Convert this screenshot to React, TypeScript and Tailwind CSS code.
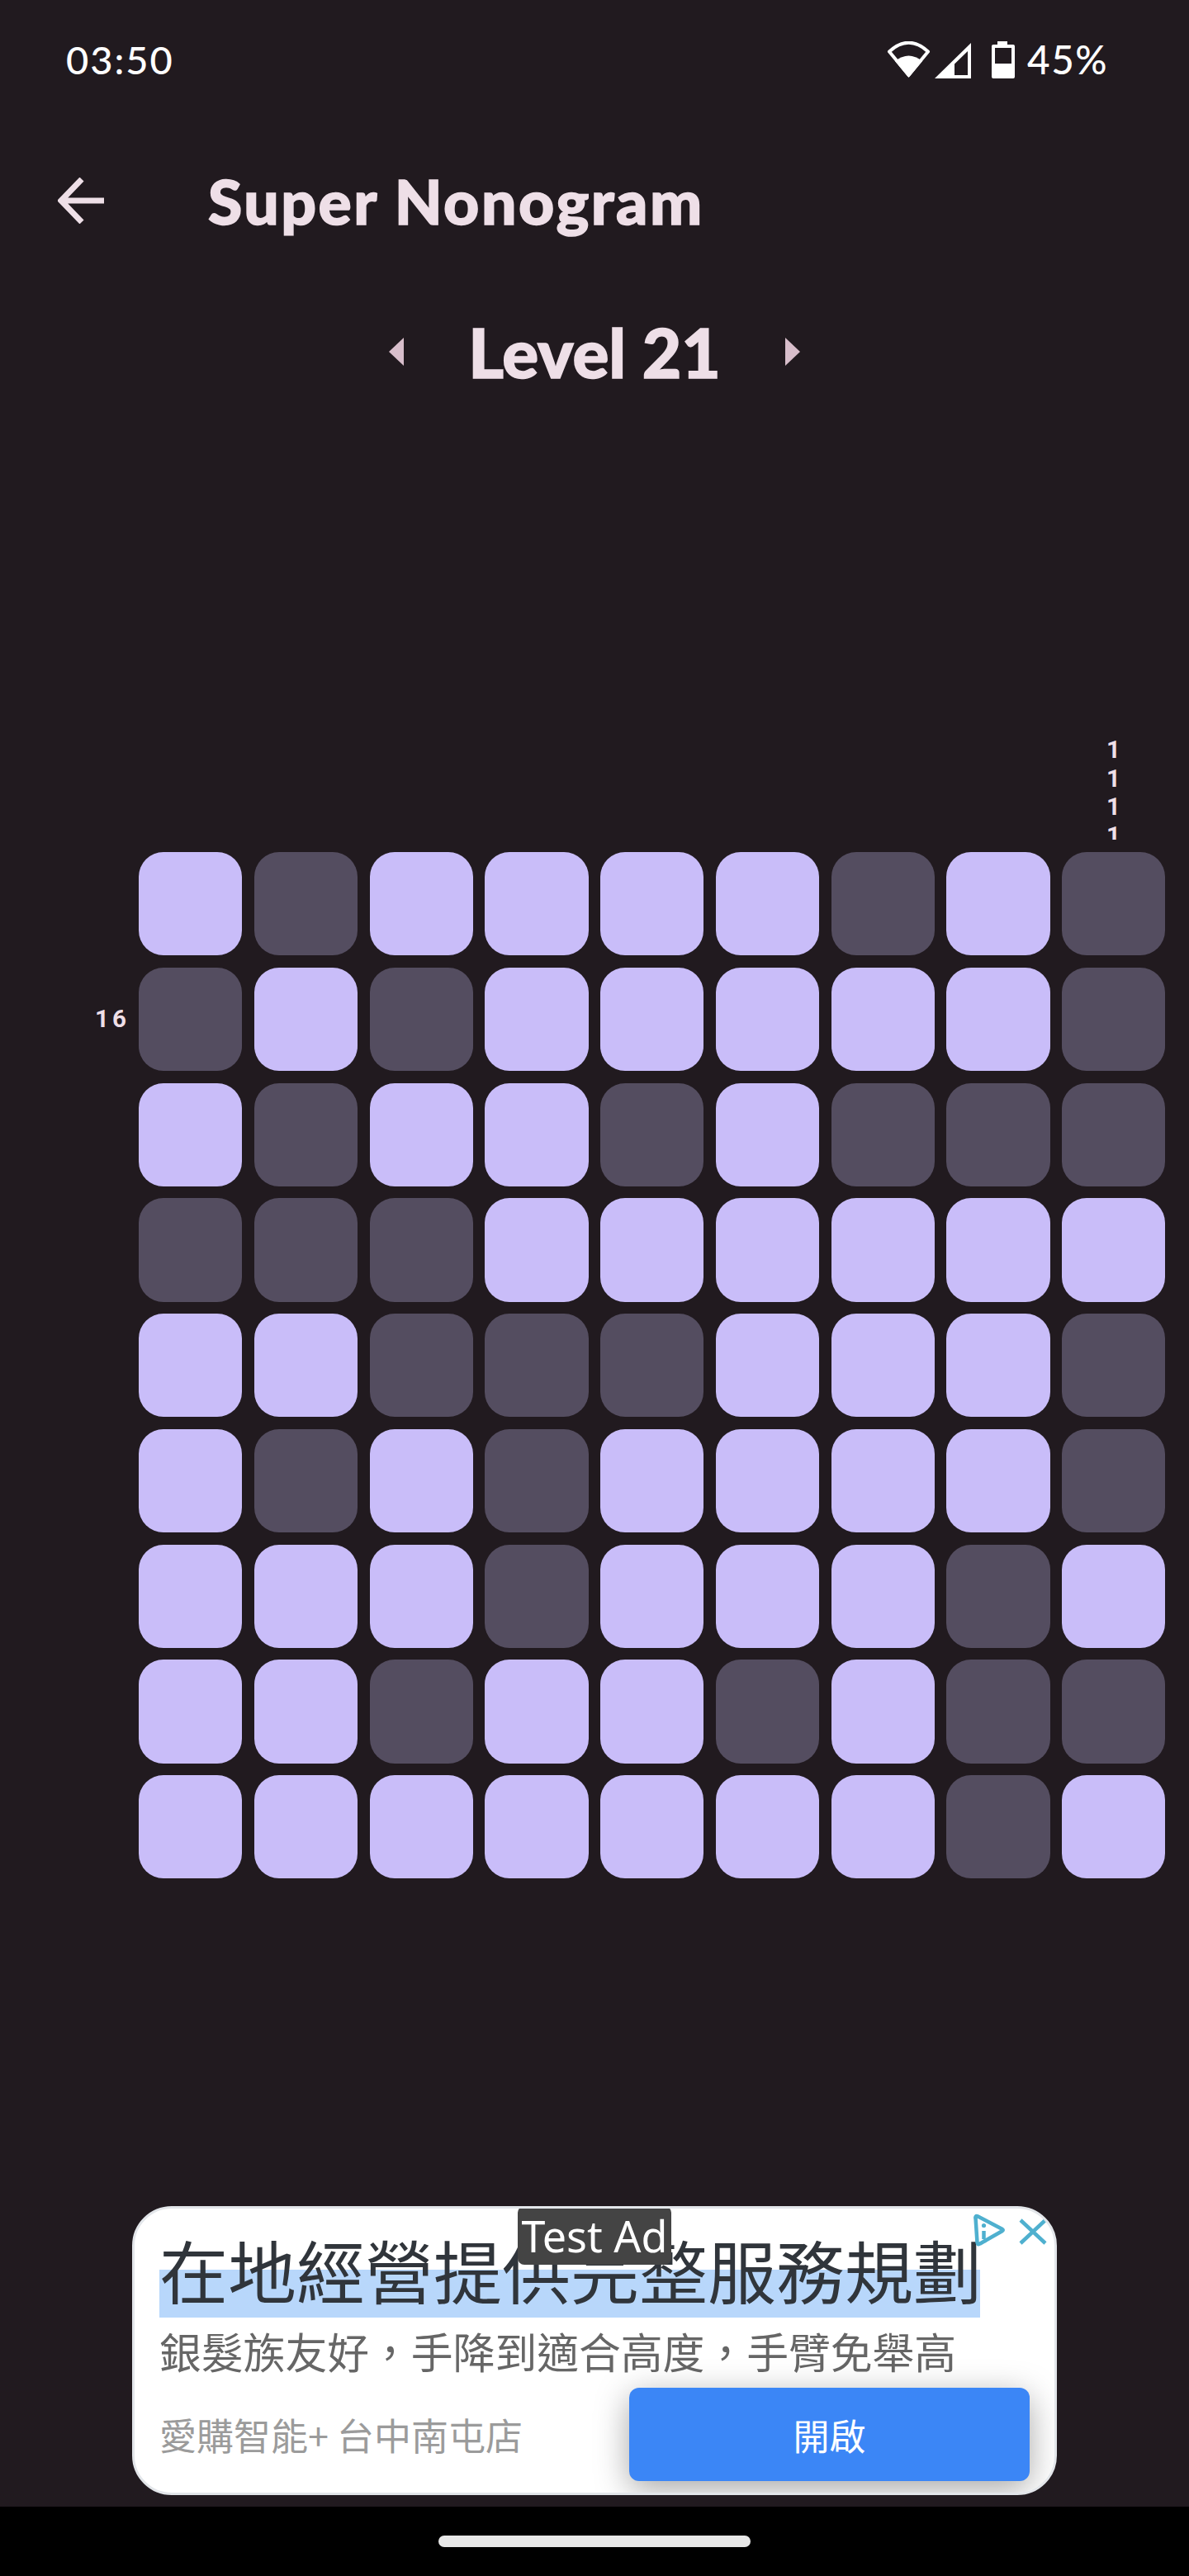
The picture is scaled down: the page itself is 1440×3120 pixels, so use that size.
const L = 1;
const D = 0;

// puzzle state, row by row
const board = [
	[L, D, L, L, L, L, D, L, D],
	[D, L, D, L, L, L, L, L, D],
	[L, D, L, L, D, L, D, D, D],
	[D, D, D, L, L, L, L, L, L],
	[L, L, D, D, D, L, L, L, D],
	[L, D, L, D, L, L, L, L, D],
	[L, L, L, D, L, L, L, D, L],
	[L, L, D, L, L, D, L, D, D],
	[L, L, L, L, L, L, L, D, L],
];

function StatusIcons() {
	return (
		<svg width="156" height="46" viewBox="1075 50 156 46" fill="none">
			{/* wifi */}
			<path d="M1101.5 91 L1078 62.5 Q1101.5 41 1125 62.5 Z" stroke="#fff" strokeWidth="4" strokeLinejoin="round" />
			<path d="M1101.5 94 L1085 74 Q1101.5 61 1118 74 Z" fill="#fff" />
			{/* signal */}
			<path fillRule="evenodd" d="M1133 95 L1177 52 V95 Z M1157 91 H1173 V62 L1157 77.5 Z" fill="#fff" />
			{/* battery */}
			<path fillRule="evenodd" d="M1209 50 H1221 V54 H1228 Q1230 54 1230 56 V93 Q1230 95 1228 95 H1204 Q1202 95 1202 93 V56 Q1202 54 1204 54 H1209 Z M1206 58 V77 H1226 V58 Z" fill="#fff" />
		</svg>
	);
}

function AdChoices() {
	return (
		<svg width="40" height="40" viewBox="0 0 40 40" fill="none" stroke="#4fb0cf" strokeWidth="4.5" strokeLinecap="round">
			<path d="M3.5 5 Q3.5 2 6.5 3.5 L36 19 Q37.5 20 36 21 L15 33" />
			<path d="M3.5 5 L5.5 35 Q6 38.5 9 36.5 L15 33" />
			<path d="M13.5 21 V31" strokeLinecap="butt" />
			<circle cx="13.5" cy="14.5" r="2.6" fill="#4fb0cf" stroke="none" />
		</svg>
	);
}

export default function App() {
	return (
		<div className="w-[1440px] h-[3120px] bg-[#211a1f] flex flex-col font-['Lato',sans-serif] overflow-hidden">
			{/* Status bar */}
			<div className="h-[183px] shrink-0 flex items-start justify-between pl-[80px] pr-[98px] pt-[50px] text-white">
				<span className="text-[47px] leading-[44px] tracking-[2px] font-medium">03:50</span>
				<div className="flex items-start gap-[14px]">
					<StatusIcons />
					<span className="text-[47.5px] leading-[44px] tracking-[1.5px] font-medium">45%</span>
				</div>
			</div>

			{/* App bar */}
			<div className="h-[120px] shrink-0 flex items-center pl-[70px] text-[#eedfe7]">
				<svg width="56" height="56" viewBox="0 0 56 56" fill="none" stroke="#eedfe7" strokeWidth="7">
					<path d="M56 28 H5 M29 2 L4 28 L29 54" />
				</svg>
				<h1 className="ml-[126px] text-[75px] leading-none font-black tracking-[2.5px] [-webkit-text-stroke:1.5px_#eedfe7]">Super Nonogram</h1>
			</div>

			{/* Level picker */}
			<div className="mt-[75px] h-[96px] shrink-0 flex items-center justify-center text-[#eedfe7]">
				<svg width="18" height="34" viewBox="0 0 18 34" className="fill-[#d8becb]">
					<path d="M18 0 V34 L0 17 Z" />
				</svg>
				<span className="mx-[78px] text-[82px] leading-none font-black [-webkit-text-stroke:1.5px_#eedfe7]">Level 21</span>
				<svg width="18" height="34" viewBox="0 0 18 34" className="fill-[#d8becb]">
					<path d="M0 0 V34 L18 17 Z" />
				</svg>
			</div>

			{/* Top clue */}
			<div className="mt-[404px] h-[139px] shrink-0 flex flex-col items-center overflow-hidden text-[#eedfe7] pl-[1257px] pt-[13px] font-bold text-[29.5px] leading-[34.67px] font-['Roboto',sans-serif]">
				<span>1</span>
				<span>1</span>
				<span>1</span>
				<span>1</span>
			</div>

			{/* Board */}
			<div className="mt-[15px] shrink-0 flex pl-[112px]">
				<div className="w-[56px] shrink-0 pt-[140px]">
					<div className="h-[125px] flex items-center text-[#eedfe7] text-[29.5px] font-bold tracking-[4px] pl-[3px] font-['Roboto',sans-serif]">16</div>
				</div>
				<div className="grid grid-cols-[repeat(9,125.25px)] auto-rows-[125.25px] gap-[14.5px]">
					{board.flat().map((cell, i) => (
						<div key={i} className={`rounded-[30px] ${cell ? "bg-[#c9bdf9]" : "bg-[#544d60]"}`} />
					))}
				</div>
			</div>

			<div className="flex-1" />

			{/* Ad */}
			<div className="relative mx-[160px] h-[350px] shrink-0 rounded-[48px] bg-white border-[3px] border-[#e3e6ea] overflow-hidden font-['Noto_Sans_CJK_TC',sans-serif]">
				<div className="absolute left-[464px] top-[-3px] w-[186px] h-[71px] rounded-[8px] bg-[#444444] text-white text-[52px] leading-[72px] text-center font-['Noto_Sans',sans-serif]">Test Ad</div>
				<div className="absolute left-[1015px] top-[6px]">
					<AdChoices />
				</div>
				<svg width="34" height="32" viewBox="0 0 34 32" className="absolute left-[1071px] top-[12px]">
					<path d="M2 2 L32 30 M32 2 L2 30" stroke="#4fb0cf" strokeWidth="4.5" />
				</svg>

				<div className="pt-[22px] pl-[30px] flex flex-col">
					<div className="w-[994px] h-[110px] text-[83px] leading-[102px] text-[#30353b] whitespace-nowrap bg-[linear-gradient(transparent_52px,#b8d7fb_52px)]">在地經營提供完整服務規劃</div>
					<div className="mt-[5px] text-[50.8px] leading-[70px] text-[#666666] whitespace-nowrap">銀髮族友好，手降到適合高度，手臂免舉高</div>
					<div className="mt-[10px] flex items-center justify-between pr-[30px]">
						<span className="text-[45px] leading-[60px] text-[#9b9b9b] whitespace-nowrap">愛購智能+ 台中南屯店</span>
						<button className="w-[485px] h-[113px] rounded-[12px] bg-[#3b86f6] text-white text-[44px] shadow-[0_10px_40px_rgba(0,0,0,0.35)]">開啟</button>
					</div>
				</div>
			</div>

			<div className="h-[14px] shrink-0" />

			{/* Nav bar */}
			<div className="h-[84px] shrink-0 bg-black flex justify-center pt-[35px]">
				<div className="w-[378px] h-[14px] rounded-full bg-[#e8e8e8]" />
			</div>
		</div>
	);
}
